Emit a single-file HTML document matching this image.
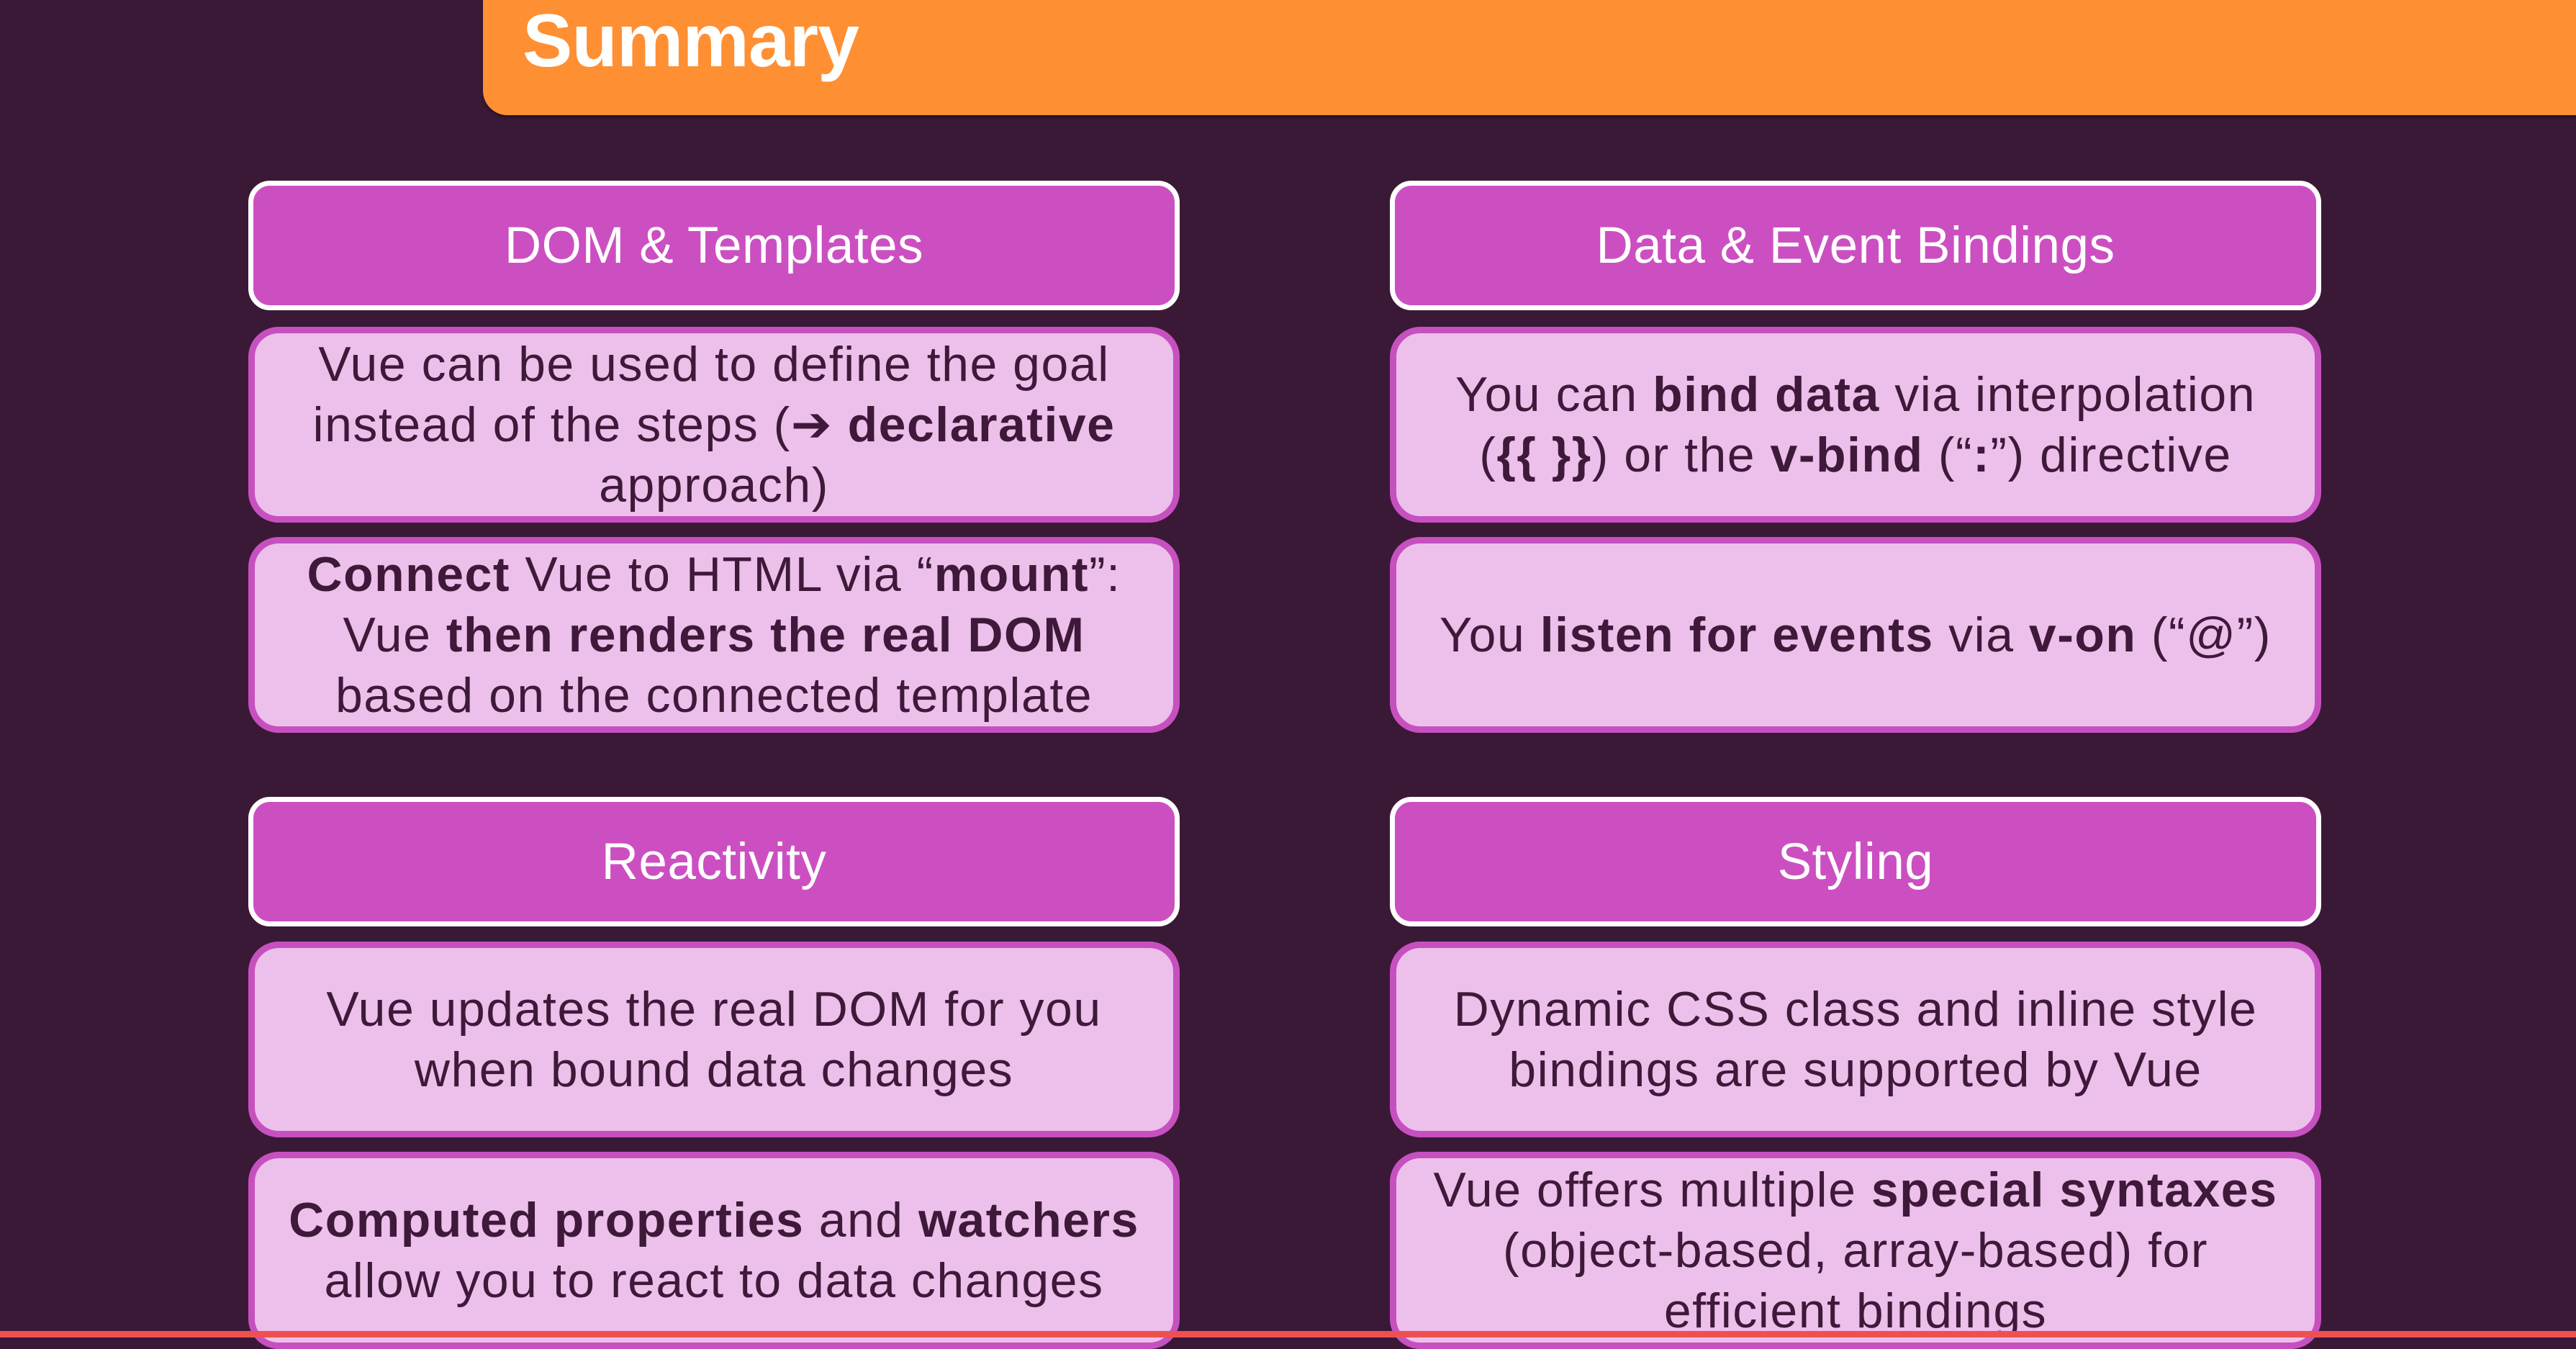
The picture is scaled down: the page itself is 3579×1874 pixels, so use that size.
<!DOCTYPE html>
<html><head><meta charset="utf-8">
<style>
html,body{margin:0;padding:0}
body{width:3579px;height:1871px;overflow:hidden;background:#3a1936;position:relative;font-family:"Liberation Sans","DejaVu Sans",sans-serif}
.top{position:absolute;left:671px;top:-20px;width:2950px;height:180px;background:#ff8f33;border-bottom-left-radius:34px;box-shadow:0 3px 4px rgba(0,0,0,.35)}
.title{position:absolute;left:726px;top:2px;font-size:104px;font-weight:700;color:#fff;letter-spacing:-1px;line-height:110px}
.h{position:absolute;background:#cc4fc2;border:7px solid #fff;border-radius:30px;color:#fff;font-size:71px;display:flex;align-items:center;justify-content:center;box-sizing:border-box;width:1294px;height:180px;letter-spacing:0.5px}
.c{position:absolute;width:1294px;background:#ecc0ea;border:9px solid #c750c0;border-radius:42px;box-sizing:border-box;color:#3e1939;font-size:68px;letter-spacing:1.5px;line-height:84px;display:flex;align-items:center;justify-content:center;text-align:center;white-space:nowrap}
b{font-weight:700}
.L{left:345px}.R{left:1931px}
.red{position:absolute;left:0;top:1849px;width:3579px;height:9px;background:#ee5050}
</style></head><body>
<div class="top"></div>
<div class="title">Summary</div>

<div class="h L" style="top:251px">DOM &amp; Templates</div>
<div class="c L" style="top:454px;height:272px"><div>Vue can be used to define the goal<br>instead of the steps (<b>➔ declarative</b><br>approach)</div></div>
<div class="c L" style="top:746px;height:272px"><div><b>Connect</b> Vue to HTML via “<b>mount</b>”:<br>Vue <b>then renders the real DOM</b><br>based on the connected template</div></div>

<div class="h R" style="top:251px">Data &amp; Event Bindings</div>
<div class="c R" style="top:454px;height:272px"><div>You can <b>bind data</b> via interpolation<br>(<b>{{ }}</b>) or the <b>v-bind</b> (“<b>:</b>”) directive</div></div>
<div class="c R" style="top:746px;height:272px"><div>You <b>listen for events</b> via <b>v-on</b> (“@”)</div></div>

<div class="h L" style="top:1107px">Reactivity</div>
<div class="c L" style="top:1308px;height:272px"><div>Vue updates the real DOM for you<br>when bound data changes</div></div>
<div class="c L" style="top:1600px;height:274px"><div><b>Computed properties</b> and <b>watchers</b><br>allow you to react to data changes</div></div>

<div class="h R" style="top:1107px">Styling</div>
<div class="c R" style="top:1308px;height:272px"><div>Dynamic CSS class and inline style<br>bindings are supported by Vue</div></div>
<div class="c R" style="top:1600px;height:274px"><div>Vue offers multiple <b>special syntaxes</b><br>(object-based, array-based) for<br>efficient bindings</div></div>

<div class="red"></div>
</body></html>
